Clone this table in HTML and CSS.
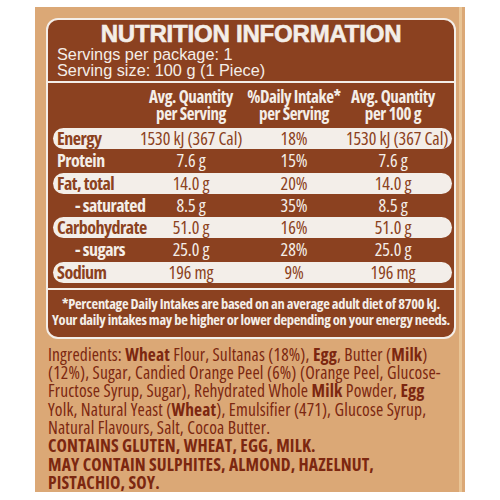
FILE: index.html
```html
<!DOCTYPE html>
<html lang="en">
<head>
<meta charset="UTF-8">
<title>Nutrition Information</title>
<link rel="stylesheet" href="styles.css">
</head>
<body>

<!-- label -->
<div class="label">

	<!-- panel -->
	<div class="facts">
		<h1 class="title">NUTRITION INFORMATION</h1>
		<p class="serving">Servings per package: 1<br>Serving size: 100 g (1 Piece)</p>

		<div class="table">
			<div class="row head">
				<span></span>
				<span>Avg. Quantity<br>per Serving</span>
				<span>%Daily Intake*<br>per Serving</span>
				<span>Avg. Quantity<br>per 100 g</span>
			</div>

			<div class="rows">
				<div class="row pill">
					<span class="name">Energy</span><span>1530 kJ (367 Cal)</span><span>18%</span><span>1530 kJ (367 Cal)</span>
				</div>
				<div class="row">
					<span class="name">Protein</span><span>7.6 g</span><span>15%</span><span>7.6 g</span>
				</div>
				<div class="row pill">
					<span class="name">Fat, total</span><span>14.0 g</span><span>20%</span><span>14.0 g</span>
				</div>
				<div class="row">
					<span class="name sub">- saturated</span><span>8.5 g</span><span>35%</span><span>8.5 g</span>
				</div>
				<div class="row pill">
					<span class="name">Carbohydrate</span><span>51.0 g</span><span>16%</span><span>51.0 g</span>
				</div>
				<div class="row">
					<span class="name sub">- sugars</span><span>25.0 g</span><span>28%</span><span>25.0 g</span>
				</div>
				<div class="row pill">
					<span class="name">Sodium</span><span>196 mg</span><span>9%</span><span>196 mg</span>
				</div>
			</div>
		</div>

		<p class="note">*Percentage Daily Intakes are based on an average adult diet of 8700 kJ.<br>Your daily intakes may be higher or lower depending on your energy needs.</p>
	</div>
	<!-- /panel -->

	<p class="ingredients">Ingredients: <b>Wheat</b> Flour, Sultanas (18%), <b>Egg</b>, Butter (<b>Milk</b>)<br>
	(12%), Sugar, Candied Orange Peel (6%) (Orange Peel, Glucose-<br>
	Fructose Syrup, Sugar), Rehydrated Whole <b>Milk</b> Powder, <b>Egg</b><br>
	Yolk, Natural Yeast (<b>Wheat</b>), Emulsifier (471), Glucose Syrup,<br>
	Natural Flavours, Salt, Cocoa Butter.<br>
	<b>CONTAINS GLUTEN, WHEAT, EGG, MILK.<br>
	MAY CONTAIN SULPHITES, ALMOND, HAZELNUT,<br>
	PISTACHIO, SOY.</b></p>

</div>
<!-- /label -->

</body>
</html>
```

FILE: styles.css
```css
/* -------------------------------------
		GLOBAL
------------------------------------- */
* {
	margin: 0;
	padding: 0;
	box-sizing: border-box;
}

body {
	background: #fff;
	font-family: "Liberation Sans", Arial, sans-serif;
}

/* -------------------------------------
		LABEL
------------------------------------- */
.label {
	margin: 7px 0 0 35px;
	width: 430px;
	height: 485px;
	padding: 11px 9px 0 11px;
	background: #dba876;
	box-shadow: inset -3px 0 0 #dba876, inset -6px 0 0 #e9c596;
}

.facts {
	background: #8b4120;
	border: 2px solid #f4eee8;
	border-radius: 12px;
	color: #f4eee8;
}

.title {
	padding-top: 2px;
	font-size: 24px;
	line-height: 24px;
	font-weight: bold;
	text-align: center;
	letter-spacing: -0.2px;
	-webkit-text-stroke: 0.6px #f4eee8;
}

.serving {
	padding-left: 9px;
	font-size: 16.3px;
	line-height: 16px;
	padding-bottom: 3px;
}

/* -------------------------------------
		TABLE
------------------------------------- */
.table {
	border-top: 2px solid #f4eee8;
	padding: 5px 0 5px;
	font-family: "Open Sans", sans-serif;
	font-stretch: 75%;
}

.row {
	display: grid;
	grid-template-columns: 83px 102px 104px 94px;
	margin: 0 2px 0 5px;
	padding-left: 4px;
	height: 21px;
	font-size: 18px;
	line-height: 21px;
	letter-spacing: -0.1px;
	text-align: center;
	white-space: nowrap;
}

.row .name {
	text-align: left;
	font-weight: bold;
	letter-spacing: -0.5px;
}

.row .sub {
	padding-left: 18px;
}

.head {
	height: auto;
	font-size: 17px;
	font-weight: bold;
	line-height: 17px;
	letter-spacing: -0.4px;
	margin-bottom: 6px;
}

.rows {
	display: flex;
	flex-direction: column;
	gap: 1.3px;
}

.pill {
	background: #f3eee9;
	color: #8b4120;
	border-radius: 11px;
}

.note {
	border-top: 2px solid #f4eee8;
	padding: 6px 0 9px;
	font-family: "Open Sans", sans-serif;
	font-stretch: 75%;
	font-weight: bold;
	font-size: 14.5px;
	line-height: 16px;
	letter-spacing: -0.3px;
	text-align: center;
	white-space: nowrap;
}

/* -------------------------------------
		INGREDIENTS
------------------------------------- */
.ingredients {
	padding: 6px 0 0 2px;
	color: #7c2710;
	font-family: "Open Sans", sans-serif;
	font-stretch: 87.5%;
	font-size: 17.5px;
	line-height: 18.3px;
	letter-spacing: 0.15px;
	white-space: nowrap;
}
```
